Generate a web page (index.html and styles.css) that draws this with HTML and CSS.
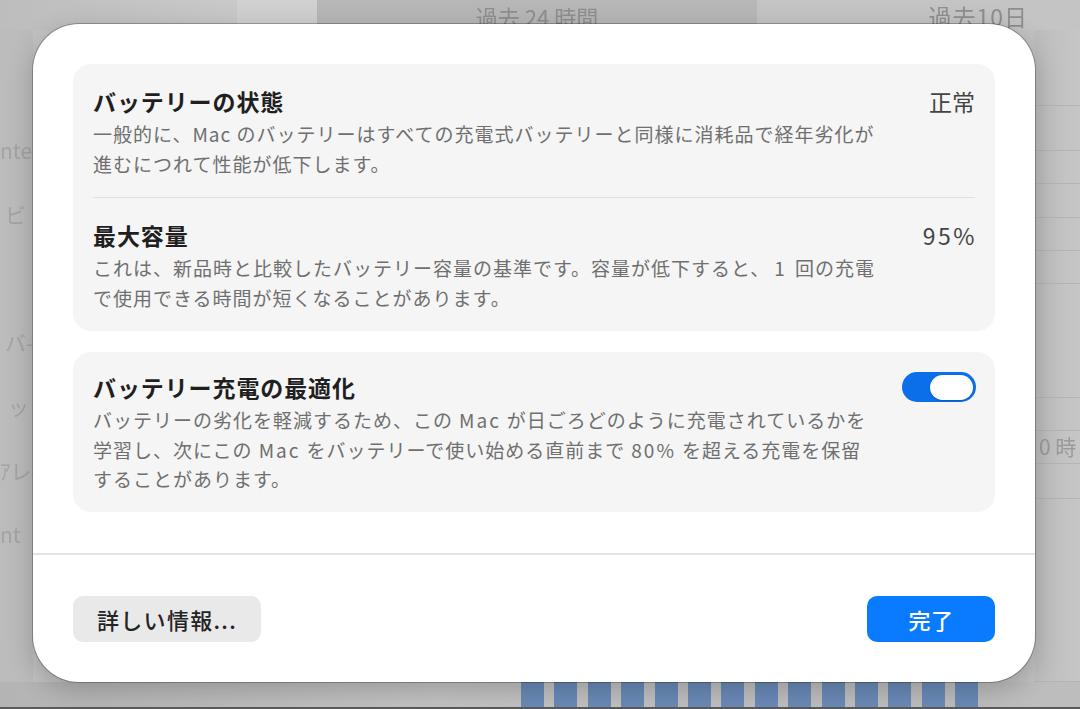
FILE: index.html
```html
<!DOCTYPE html>
<html lang="ja">
	<head>
		<meta charset="UTF-8"/>
		<title>バッテリーの状態</title>
		<link rel="stylesheet" href="styles.css">
	</head>
	<body>
		<!-- blurred settings window behind the sheet -->
		<div class="backdrop">
			<div class="bd-top">
				<span class="seg-a"></span>
				<span class="seg-b"></span>
				<span class="seg-c">過去 24 時間</span>
				<span class="seg-d">過去10日</span>
			</div>
			<div class="bd-left">
				<span>ntel</span>
				<span class="ind">ビ</span>
				<span></span>
				<span class="ind">バ-</span>
				<span class="ind2">ッ</span>
				<span>ｱレ-</span>
				<span>nt</span>
			</div>
			<div class="bd-mid"></div>
			<div class="bd-right">
				<div></div>
				<div></div>
				<div></div>
				<div></div>
				<div></div>
				<div></div>
				<div></div>
				<div></div>
				<div class="hour">0 時</div>
				<div></div>
				<div></div>
				<div></div>
			</div>
			<div class="bd-bottom">
				<span class="bar"></span><span class="bar"></span><span class="bar"></span><span class="bar"></span>
				<span class="bar"></span><span class="bar"></span><span class="bar"></span><span class="bar"></span>
				<span class="bar"></span><span class="bar"></span><span class="bar"></span><span class="bar"></span>
				<span class="bar"></span><span class="bar"></span>
			</div>
		</div>

		<div class="dialog">
			<div class="dialog-body">
				<section class="card">
					<div class="row">
						<div class="row-text">
							<h2>バッテリーの状態</h2>
							<p>一般的に、Mac のバッテリーはすべての充電式バッテリーと同様に消耗品で経年劣化が<br>進むにつれて性能が低下します。</p>
						</div>
						<div class="value">正常</div>
					</div>
					<div class="sep"></div>
					<div class="row">
						<div class="row-text">
							<h2>最大容量</h2>
							<p>これは、新品時と比較したバッテリー容量の基準です。容量が低下すると、<span class="num">1</span>回の充電<br>で使用できる時間が短くなることがあります。</p>
						</div>
						<div class="value value-num">95%</div>
					</div>
				</section>
				<section class="card">
					<div class="row row-toggle">
						<div class="row-text">
							<h2>バッテリー充電の最適化</h2>
							<p>バッテリーの劣化を軽減するため、この<span class="lat">Mac</span>が日ごろどのように充電されているかを<br>学習し、次にこの<span class="lat">Mac</span>をバッテリーで使い始める直前まで<span class="lat">80%</span>を超える充電を保留<br>することがあります。</p>
						</div>
						<div class="toggle on"><span class="knob"></span></div>
					</div>
				</section>
			</div>
			<div class="dialog-foot">
				<button class="btn">詳しい情報...</button>
				<button class="btn btn-primary">完了</button>
			</div>
		</div>
	</body>
</html>
```

FILE: styles.css
```css
* {
	margin: 0;
	padding: 0;
	box-sizing: border-box;
}
body {
	width: 1080px;
	height: 709px;
	overflow: hidden;
	position: relative;
	background: #c2c2c2;
	font-family: "Noto Sans CJK JP", "Noto Sans", sans-serif;
}

/* backdrop */
.backdrop {
	position: absolute;
	top: 0;
	left: 0;
	right: 0;
	bottom: 0;
	display: grid;
	grid-template-columns: 33px 1fr 45px;
	grid-template-rows: 30px 1fr 27px;
	filter: blur(0.6px);
}
.bd-top {
	grid-column: 1 / 4;
	display: flex;
	font-size: 22px;
	line-height: 32px;
	color: #8e8e8e;
	white-space: nowrap;
}
.seg-a {
	width: 237px;
	background: linear-gradient(90deg, #bdbdbd, #c9c9c9);
}
.seg-b {
	width: 80px;
	background: #d0d0d0;
}
.seg-c {
	width: 440px;
	background: #b7b7b7;
	text-align: center;
}
.seg-d {
	flex: 1;
	background: #c4c4c4;
	text-align: right;
	padding-right: 52px;
	font-size: 23px;
	letter-spacing: 1px;
}
.bd-left {
	background: #bcbcbc;
	display: grid;
	grid-auto-rows: 64px;
	padding-top: 88px;
	font-size: 21px;
	line-height: 64px;
	color: #a4a4a4;
	white-space: nowrap;
}
.bd-left .ind {
	padding-left: 5px;
}
.bd-left .ind2 {
	padding-left: 8px;
}
.bd-mid {
	background: #c2c2c2;
}
.bd-right {
	background: linear-gradient(90deg, #bdbdbd, #c6c6c6);
	display: grid;
	grid-template-rows: 75px 45px 33px 34px 33px 33px 114px 33px 33px 35px 1fr;
}
.bd-right div {
	border-top: 1px solid #b4b4b4;
}
.bd-right div:first-child {
	border-top: none;
}
.bd-right .hour {
	font-size: 21px;
	line-height: 30px;
	color: #9a9a9a;
	padding-left: 4px;
	white-space: nowrap;
}
.bd-bottom {
	grid-column: 1 / 4;
	display: flex;
	gap: 10.4px;
	padding-left: 521px;
	background: linear-gradient(90deg, #b4b4b4, #c4c4c4 40%, #bdbdbd);
	border-bottom: 2px solid #5a5a5a;
}
.bar {
	width: 23px;
	background: #6a8bb8;
}

/* sheet */
.dialog {
	position: relative;
	z-index: 1;
	width: 1002px;
	height: 658px;
	margin: 24px 0 0 33px;
	background: #fff;
	border-radius: 46px;
	box-shadow: 0 0 0 1px rgba(0, 0, 0, 0.25), 0 8px 28px rgba(0, 0, 0, 0.22);
	display: flex;
	flex-direction: column;
}
.dialog-body {
	padding: 40px 40px 41px;
	display: flex;
	flex-direction: column;
	gap: 21px;
	border-bottom: 2px solid #e4e4e4;
}
.card {
	background: #f5f5f5;
	border-radius: 18px;
}
.row {
	display: flex;
	justify-content: space-between;
	align-items: flex-start;
	padding: 22px 20px 19px;
}
.row-toggle {
	padding: 20px 19px 18px 20px;
}
.row h2 {
	font-size: 23px;
	font-weight: 600;
	line-height: 30px;
	letter-spacing: 0.9px;
	color: #1f1f1f;
}
.row p {
	margin-top: 3px;
	font-size: 19px;
	line-height: 29.5px;
	letter-spacing: 1px;
	color: #6f6f6f;
	white-space: nowrap;
}
.row p .lat {
	padding: 0 6px;
	letter-spacing: 2px;
}
.row p .num {
	padding: 0 6px 0 4px;
	letter-spacing: 4px;
}
.value {
	font-size: 23px;
	line-height: 30px;
	color: #444;
}
.value-num {
	letter-spacing: 2.5px;
	margin-right: -2px;
}
.sep {
	height: 1px;
	margin: 0 20px;
	background: #e0e0e0;
}
.toggle {
	width: 74px;
	height: 30px;
	border-radius: 15px;
	background: #0b6fe9;
	display: flex;
	align-items: center;
	justify-content: flex-end;
	padding: 0 3px;
}
.knob {
	width: 43px;
	height: 25px;
	border-radius: 13px;
	background: #fff;
	box-shadow: 0 1px 2px rgba(0, 0, 0, 0.2);
}
.dialog-foot {
	display: flex;
	justify-content: space-between;
	padding: 41px 40px;
}
.btn {
	height: 46px;
	padding: 0 24px;
	border: none;
	border-radius: 10px;
	background: #e9e9e9;
	color: #242424;
	font: 500 22px/46px "Noto Sans CJK JP", sans-serif;
	letter-spacing: 1.3px;
}
.btn-primary {
	width: 128px;
	padding: 0;
	background: #0a7bff;
	color: #fff;
	letter-spacing: 0.5px;
}
```
